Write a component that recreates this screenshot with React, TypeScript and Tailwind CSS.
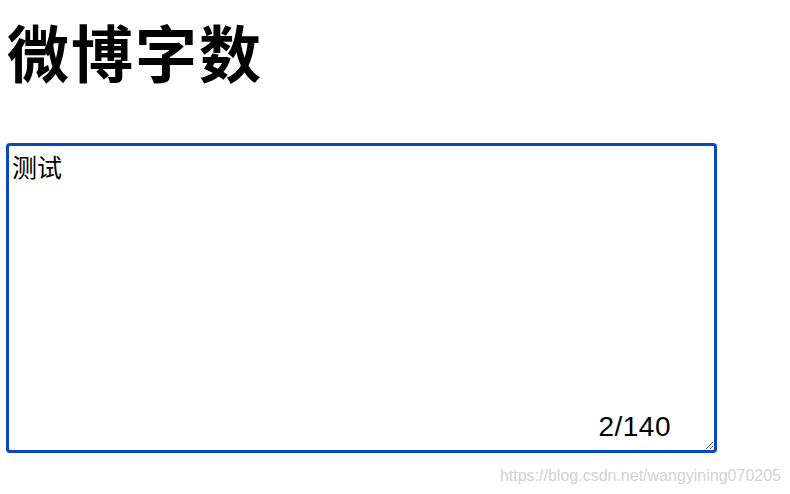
import { useState } from "react";

const MAX = 140;

export default function App() {
  const [text, setText] = useState("测试");

  return (
    <div className="relative h-[494px] w-[790px] overflow-hidden bg-white text-black">
      <h1 className="pl-[7px] pt-[20px] text-[62px] font-bold leading-none tracking-[2px] [font-family:'Noto_Sans_CJK_SC',sans-serif]">
        微博字数
      </h1>

      <div className="relative ml-[6px] mt-[61px] w-[711px]">
        <textarea
          autoFocus
          value={text}
          onChange={(e) => setText(e.target.value.slice(0, MAX))}
          className="block h-[310px] w-full resize rounded-[4px] border-[3px] border-[#0b46c1] px-[3px] py-[4px] text-[25px] leading-[32px] caret-black outline-none [font-family:'Noto_Sans_CJK_SC',sans-serif]"
        />
        <span className="pointer-events-none absolute bottom-[12px] right-[46px] text-[28px] leading-none tracking-[0.5px] [font-family:'Liberation_Sans',sans-serif]">
          {text.length}/{MAX}
        </span>
      </div>

      <span className="absolute bottom-[10px] right-[9px] text-[16px] leading-none text-[#d2d2d2] [font-family:'Liberation_Sans',sans-serif]">
        https://blog.csdn.net/wangyining070205
      </span>
    </div>
  );
}
